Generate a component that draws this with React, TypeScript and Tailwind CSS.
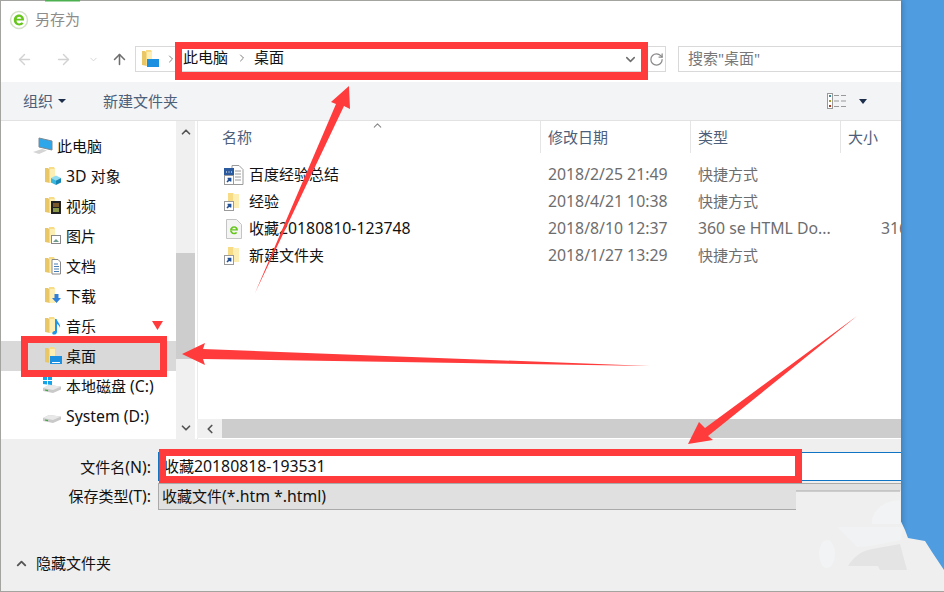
import React from 'react';
import { ArrowLeft, ArrowRight, ArrowUp, ChevronDown, ChevronLeft, ChevronRight, ChevronUp, RotateCw } from 'lucide-react';

// Latin runs sit a little larger next to CJK, as Segoe UI does beside YaHei
const Mixed: React.FC<{ text: string }> = ({ text }) => (
    <>
        {text.split(/([\x20-\x7e]+)/).map((part, i) =>
            i % 2 === 1 ? <span key={i} className="text-[15.8px] leading-none">{part}</span> : <span key={i}>{part}</span>
        )}
    </>
);

const Folder: React.FC<{ children?: React.ReactNode }> = ({ children }) => (
    <svg width="18" height="20" viewBox="0 0 18 20" className="shrink-0">
        <path d="M1 2h3l2 2v13l-5-1z" fill="#e9c766" />
        <path d="M5 1h5l1 2h0v14H5z" fill="#f8dc85" />
        <path d="M6 3h5v14H6z" fill="#fdeeb4" />
        {children}
    </svg>
);

const Shortcut = () => (
    <g>
        <rect x="0.5" y="9.5" width="9" height="9" fill="#fff" stroke="#9a9a9a" />
        <path d="M3 16l3-3M3.6 12.6H6.6V15.6" stroke="#1f4f96" strokeWidth="1.6" fill="none" />
    </g>
);

const sideIcons: Record<string, React.ReactNode> = {
    '3D 对象': <g><path d="M7 12l5-2.500 5 2.500-5 2.500z" fill="#8fdcf2" /><path d="M7 12l5 2.500V19l-5-2.500z" fill="#3bb6dc" /><path d="M17 12l-5 2.500V19l5-2.500z" fill="#1487b8" /></g>,
    '视频': <g><rect x="7" y="5" width="10" height="13" fill="#222" /><rect x="9" y="7" width="6" height="4" fill="#7a5a2a" /><rect x="9" y="12" width="6" height="4" fill="#8a9a4a" /></g>,
    '图片': <g><rect x="7.5" y="9.5" width="9" height="8" fill="#fff" stroke="#888" /><path d="M9 16l3-3 3 3z" fill="#6f9a8c" /></g>,
    '文档': <g><path d="M8 3.5h6l2.5 2.5v12H8z" fill="#fff" stroke="#888" /><path d="M10 8h4M10 10.5h5M10 13h5M10 15.5h5" stroke="#4a7fb5" /></g>,
    '下载': <path d="M10.5 8h4v4h2.5l-4.5 5-4.5-5h2.500z" fill="#2f80d8" />,
    '音乐': <path d="M11 3h1.600c.4 3 4.400 5 3.400 9-.4-2-2-3.400-3-4v8c0 2-2.500 3-4 2.400C7.500 17.600 8.500 15 11 15z" fill="#2196e8" />,
    '桌面': <g><rect x="6" y="10" width="12" height="8" fill="#1b8fe0" /><path d="M8 16.500h8" stroke="#fff" /></g>,
};

const Drive: React.FC<{ windows?: boolean }> = ({ windows }) => (
    <svg width="20" height="20" viewBox="0 0 20 20" className="shrink-0">
        {windows && <path d="M1 1l4-.5V4H1zM6 .3L10 0v4H6zM1 5h4v3.500L1 8zM6 5h4v4l-4-.4z" fill="#12a3e8" />}
        <path d="M1 12l6-3 12 1.500v3L11 17l-10-2z" fill="#c9c9c9" />
        <path d="M1 12l10 2 8-3.500-12-1.500z" fill="#e8e8e8" />
        <path d="M3 14l3 .6" stroke="#3ca63c" strokeWidth="1.200" />
    </svg>
);

const SideRow: React.FC<{ label: string; active?: boolean }> = ({ label, active }) => (
    <div className={`h-[30px] flex items-center pl-[43px] gap-[4px] ${active ? 'bg-[#d9d9d9]' : ''}`}>
        {label === '本地磁盘 (C:)' || label === 'System (D:)' ? (
            <div className="-ml-[2px]"><Drive windows={label === '本地磁盘 (C:)'} /></div>
        ) : (
            <Folder>{sideIcons[label]}</Folder>
        )}
        <span className="text-[15px] text-[#111]"><Mixed text={label} /></span>
    </div>
);

const Logo = () => (
    <svg width="20" height="20" viewBox="0 0 20 20" className="shrink-0">
        <circle cx="10" cy="10" r="8.500" fill="#fff" stroke="#d3dfc6" strokeWidth="1.500" />
        <path d="M5.500 10.500h9.500c.3-3.500-2-6-5-6s-5.200 2.400-5.200 5.600 2.300 5.400 5.400 5.400c1.800 0 3.400-.7 4.400-2l-1.900-1.200c-.6.700-1.500 1.100-2.500 1.100-1.500 0-2.600-1-2.700-2.900zM7.800 8.700c.3-1.200 1.100-1.900 2.300-1.900s2 .7 2.200 1.900z" fill="#66c61c" fillRule="evenodd" />
    </svg>
);

const files = [
    { name: '百度经验总结', date: '2018/2/25 21:49', type: '快捷方式', size: '', icon: 'doc' },
    { name: '经验', date: '2018/4/21 10:38', type: '快捷方式', size: '', icon: 'folder' },
    { name: '收藏20180810-123748', date: '2018/8/10 12:37', type: '360 se HTML Do...', size: '316', icon: 'html' },
    { name: '新建文件夹', date: '2018/1/27 13:29', type: '快捷方式', size: '', icon: 'folder' },
];

const FileIcon: React.FC<{ kind: string }> = ({ kind }) => {
    if (kind === 'doc') {
        return (
            <svg width="20" height="20" viewBox="0 0 20 20" className="shrink-0">
                <path d="M8 .5h7l4 4v15H8z" fill="#fff" stroke="#9a9a9a" />
                <path d="M11 6h6M11 9h6M11 12h6M11 15h6" stroke="#9a9a9a" />
                <rect x="0" y="3" width="10" height="7" fill="#2b5a9e" />
                <path d="M2 7h1M4.500 7h1M7 7h1" stroke="#fff" />
                <rect x="0.500" y="10.500" width="9" height="9" fill="#fff" stroke="#9a9a9a" />
                <path d="M3 17l3-3M3.600 13.600H6.600V16.600" stroke="#1f4f96" strokeWidth="1.600" fill="none" />
            </svg>
        );
    }
    if (kind === 'html') {
        return (
            <svg width="20" height="20" viewBox="0 0 20 20" className="shrink-0">
                <path d="M2.500.5h10l5 5v14h-15z" fill="#f4f4f4" stroke="#c4c4c4" />
                <path d="M6 11.500h8c.2-2.600-1.600-4.300-3.900-4.300S6 9 6 11.300s1.700 4 4 4c1.300 0 2.500-.5 3.300-1.500l-1.400-.8c-.5.500-1.100.8-1.800.8-1.100 0-1.900-.7-2.100-1.800zM8.100 10.300c.2-.9.900-1.500 2-1.500s1.700.6 1.900 1.500z" fill="#66c61c" fillRule="evenodd" />
            </svg>
        );
    }
    return (
        <svg width="20" height="20" viewBox="0 0 20 20" className="shrink-0">
            <path d="M4 1h5l1 1v14H4z" fill="#f8dc85" />
            <path d="M9 2h6v14H9z" fill="#fdeeb4" />
            <Shortcut />
        </svg>
    );
};

export default function App() {
    return (
        <div className="relative w-[944px] h-[592px] overflow-hidden flex bg-[#4f9ce0] [font-family:'Noto_Sans','Noto_Sans_CJK_SC',sans-serif]">
            {/* dialog */}
            <div className="w-[901px] h-full bg-white border-l border-t border-b border-[#a3a3a0] flex flex-col shrink-0 shadow-[2px_0_5px_rgba(0,0,0,0.18)]">
                <div className="h-[37px] flex items-center pl-[8px] gap-[6px] shrink-0">
                    <Logo />
                    <span className="text-[15px] text-[#8c8c8c]">另存为</span>
                </div>

                {/* nav bar */}
                <div className="h-[44px] flex items-start pt-[8px] shrink-0">
                    <div className="w-[134px] h-[26px] flex items-center shrink-0">
                        <ArrowLeft size={17} className="ml-[15px] text-[#d2d2d2]" />
                        <ArrowRight size={17} className="ml-[22px] text-[#d2d2d2]" />
                        <ChevronDown size={11} className="ml-[16px] text-[#d2d2d2]" />
                        <ArrowUp size={17} strokeWidth={2.2} className="ml-[12px] text-[#6e6e6e]" />
                    </div>
                    <div className="w-[513px] h-[26px] border border-[#d9d9d9] flex items-center pl-[5px] shrink-0">
                        <Folder><rect x="6" y="10" width="12" height="8" fill="#1b8fe0" /></Folder>
                        <ChevronRight size={12} className="ml-[6px] text-[#808080]" />
                        <span className="ml-[6px] -mt-[3px] text-[15px] text-[#111]">此电脑</span>
                        <ChevronRight size={12} className="ml-[8px] -mt-[2px] text-[#808080]" />
                        <span className="ml-[6px] -mt-[3px] text-[15px] text-[#111]">桌面</span>
                        <ChevronDown size={15} strokeWidth={2.4} className="ml-auto mr-[9px] text-[#6e6e6e]" />
                    </div>
                    <div className="w-[18px] h-[26px] border border-l-0 border-[#d9d9d9] flex items-center justify-center shrink-0">
                        <RotateCw size={15} className="text-[#8a8a8a]" />
                    </div>
                    <div className="ml-[12px] flex-1 h-[26px] border border-r-0 border-[#d9d9d9] flex items-center pl-[9px] text-[15px] text-[#777]">
                        <span className="-mt-[1px]">搜索"桌面"</span>
                    </div>
                </div>

                {/* command bar */}
                <div className="h-[39px] bg-[#f3f4f6] border-b border-[#e2e2e2] flex items-center shrink-0 text-[15px] text-[#4c607a]">
                    <span className="ml-[22px]">组织</span>
                    <span className="ml-[5px] w-0 h-0 border-x-[4px] border-x-transparent border-t-[4px] border-t-[#1c2e4a]" />
                    <span className="ml-[37px]">新建文件夹</span>
                    <svg width="20" height="16" viewBox="0 0 20 16" className="ml-auto">
                        <rect x="0.500" y="0.500" width="5" height="15" fill="#fff" stroke="#999" />
                        <rect x="2" y="2" width="2" height="2" fill="#3a8a9a" />
                        <rect x="2" y="7" width="2" height="2" fill="#a69a30" />
                        <rect x="2" y="12" width="2" height="2" fill="#a83a20" />
                        <path d="M7 2.500h5M14 2.500h5M7 8h5M14 8h5M7 13.500h5M14 13.500h5" stroke="#999" />
                    </svg>
                    <span className="ml-[12px] mr-[34px] w-0 h-0 border-x-[4px] border-x-transparent border-t-[5px] border-t-[#1c2e4a]" />
                </div>

                {/* middle */}
                <div className="h-[318px] flex shrink-0">
                    <div className="w-[175px] pt-[10px] shrink-0 overflow-hidden">
                        <div className="h-[30px] flex items-center pl-[31px] gap-[4px]">
                            <svg width="21" height="18" viewBox="0 0 21 18" className="shrink-0">
                                <path d="M7 1l13 3v9L7 10z" fill="#2ea6ea" stroke="#7d8a94" />
                                <path d="M1 15l9-3 5 1.500-8 3.500z" fill="#d4d4d4" />
                            </svg>
                            <span className="text-[15px] text-[#111]">此电脑</span>
                        </div>
                        {['3D 对象', '视频', '图片', '文档', '下载', '音乐'].map(label => (
                            <SideRow key={label} label={label} />
                        ))}
                        <SideRow label="桌面" active />
                        <SideRow label="本地磁盘 (C:)" />
                        <SideRow label="System (D:)" />
                    </div>
                    <div className="w-[19px] bg-[#f0f0f0] flex flex-col items-center shrink-0">
                        <div className="h-[22px] flex items-center justify-center">
                            <ChevronUp size={14} strokeWidth={3} className="text-[#555]" />
                        </div>
                        <div className="mt-[110px] w-full h-[106px] bg-[#cdcdcd]" />
                        <div className="mt-auto h-[22px] flex items-center justify-center">
                            <ChevronDown size={14} strokeWidth={3} className="text-[#555]" />
                        </div>
                    </div>
                    <div className="w-[2px] shrink-0" />
                    <div className="flex-1 min-w-0 border-l border-[#eaeaea] flex flex-col">
                        <div className="h-[32px] flex text-[15px] text-[#4c607a] shrink-0 relative">
                            <ChevronUp size={13} className="absolute left-[173px] -top-[2px] text-[#888]" />
                            <div className="w-[343px] pl-[24px] flex items-center border-r border-[#e5e5e5] shrink-0">名称</div>
                            <div className="w-[150px] pl-[7px] flex items-center border-r border-[#e5e5e5] shrink-0">修改日期</div>
                            <div className="w-[150px] pl-[7px] flex items-center border-r border-[#e5e5e5] shrink-0">类型</div>
                            <div className="pl-[7px] flex items-center">大小</div>
                        </div>
                        <div className="pt-[8px] flex-1 overflow-hidden">
                            {files.map(f => (
                                <div key={f.name} className="h-[27px] flex items-center text-[15px] whitespace-nowrap">
                                    <div className="w-[343px] pl-[26px] flex items-center gap-[5px] text-[#111] shrink-0">
                                        <FileIcon kind={f.icon} />
                                        <span><Mixed text={f.name} /></span>
                                    </div>
                                    <div className="w-[150px] pl-[7px] text-[#6d6d6d] shrink-0"><Mixed text={f.date} /></div>
                                    <div className="w-[183px] pl-[7px] text-[#6d6d6d] shrink-0"><Mixed text={f.type} /></div>
                                    <div className="pl-[7px] text-[#6d6d6d]"><Mixed text={f.size} /></div>
                                </div>
                            ))}
                        </div>
                        <div className="h-[19px] -ml-[1px] flex bg-[#f0f0f0] shrink-0 mb-[1px]">
                            <div className="w-[25px] flex items-center justify-center">
                                <ChevronLeft size={14} strokeWidth={3} className="text-[#555]" />
                            </div>
                            <div className="flex-1 bg-[#cdcdcd]" />
                        </div>
                    </div>
                </div>

                {/* bottom */}
                <div className="flex-1 bg-[#efefef] flex flex-col text-[15px] text-[#111]">
                    <div className="h-[12px] shrink-0" />
                    <div className="h-[32px] flex shrink-0">
                        <div className="w-[157px] pr-[7px] flex items-center justify-end"><span><Mixed text="文件名(N):" /></span></div>
                        <div className="flex-1 h-[29px] my-px bg-white border-y border-l border-[#0f74c4] flex items-center pl-[5px]">
                            <span><Mixed text="收藏20180818-193531" /></span>
                        </div>
                    </div>
                    <div className="h-[27px] flex shrink-0">
                        <div className="w-[157px] pr-[7px] flex items-center justify-end"><span><Mixed text="保存类型(T):" /></span></div>
                        <div className="flex-1 bg-[#e0e0e0] border-y border-l border-[#aaaaaa] flex items-center pl-[3px]">
                            <span><Mixed text="收藏文件(*.htm *.html)" /></span>
                        </div>
                    </div>
                    <div className="mt-[42px] flex items-center pl-[13px] gap-[7px]">
                        <ChevronUp size={15} strokeWidth={3} className="text-[#555]" />
                        <span>隐藏文件夹</span>
                    </div>
                </div>
            </div>

            {/* retouched corner and red annotations */}
            <svg width="944" height="592" viewBox="0 0 944 592" className="absolute inset-0 pointer-events-none">
                <path d="M45 0h35v1.500h-35z" fill="#4caf50" />
                <path d="M796 491h105v27h-105z" fill="#efefef" />
                <path d="M796 491h104" stroke="#aaaaaa" />
                <path d="M898 515L905 530L908 538L925 541L932 552L944 570V591H898z" fill="#efefef" />
                <path d="M0 591.500H944" stroke="#a3a3a0" />
                <ellipse cx="827" cy="554" rx="8" ry="14" fill="#f2f3f4" />
                <path d="M872 520c3-12 12-19 28-20v24h-28z" fill="#f2f3f5" />
                <path d="M837 527h66l-2 13-30 6-14 1z" fill="#f1f2f3" />
                <path d="M848 566c6-10 14-15 24-17l28-5 7 26h-27l-2-4z" fill="#e4e4e4" />

                <g fill="#ff3b3b">
                    <path d="M175 42h473v38h-473zM182 49v23h459v-23z" fillRule="evenodd" />
                    <path d="M21 336h146v41h-146zM28 343v27h132v-27z" fillRule="evenodd" />
                    <path d="M159 449h643v34h-643zM166 456v20h629v-20z" fillRule="evenodd" />
                    <path d="M152 321h11l-5.500 9z" />
                    <path d="M255 293L336 104L331 102L349 86L350 109L344 106z" />
                    <path d="M182 354L205 343L203 349L650 366L203 359L205 365z" />
                    <path d="M857 316L708 436L713 440L688 444L699 422L705 428z" />
                </g>
            </svg>
        </div>
    );
}
